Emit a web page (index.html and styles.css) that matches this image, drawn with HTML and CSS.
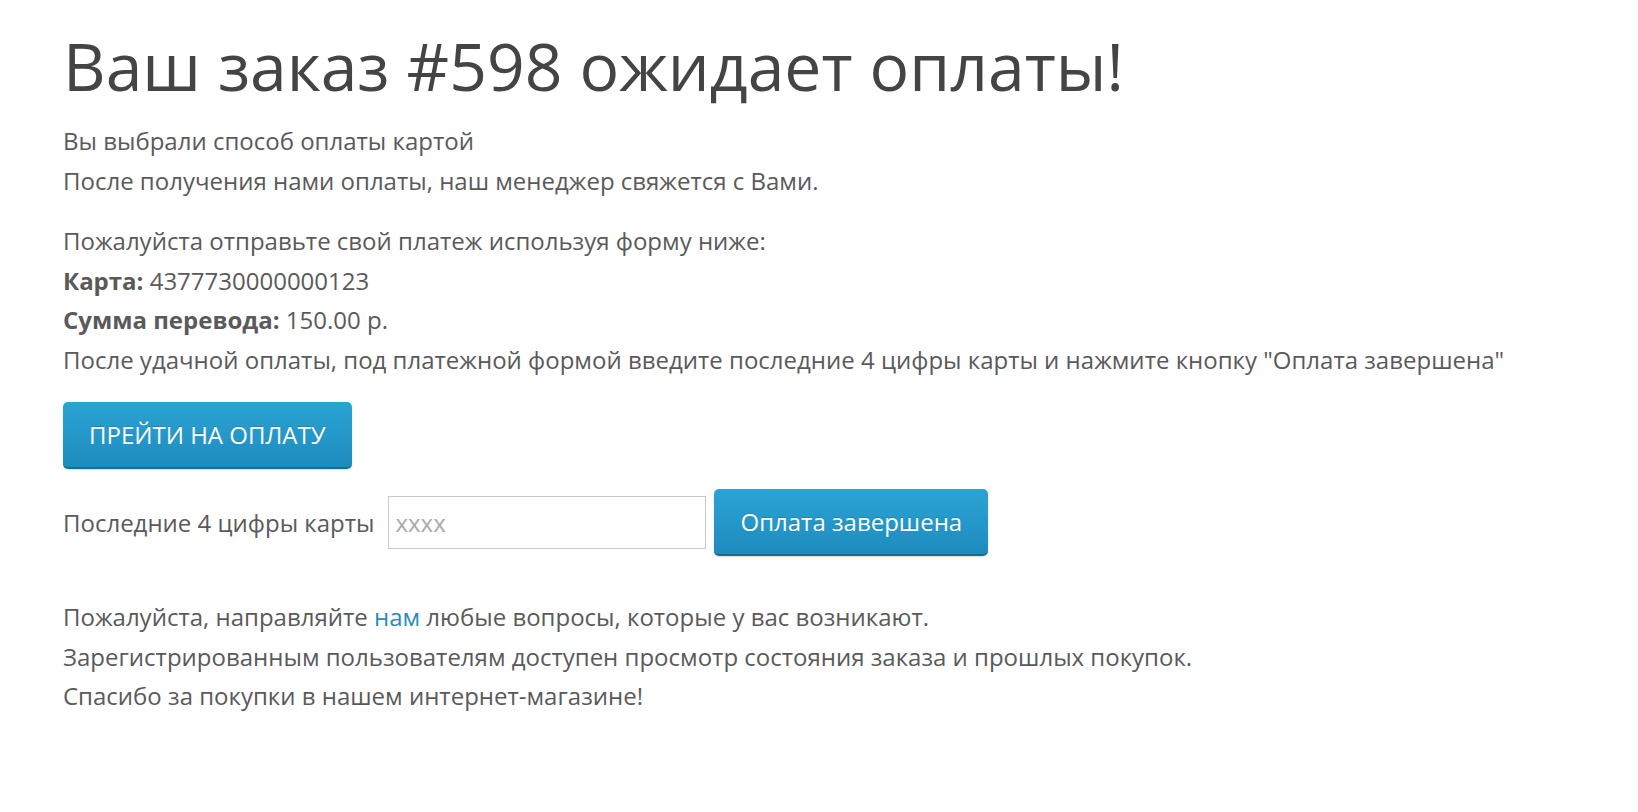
FILE: index.html
```html
<!DOCTYPE html>
<html lang="ru">
<head>
    <meta charset="UTF-8">
    <meta name="viewport" content="width=device-width, initial-scale=1.0">
    <title>Ожидание оплаты</title>
    <link rel="stylesheet" href="styles.css">
</head>
<body>
    <div class="page">
        <h1 class="title">Ваш заказ #598 ожидает оплаты!</h1>

        <div class="block">
            <div class="line">Вы выбрали способ оплаты картой</div>
            <div class="line">После получения нами оплаты, наш менеджер свяжется с Вами.</div>
        </div>

        <div class="block block-pay">
            <div class="line">Пожалуйста отправьте свой платеж используя форму ниже:</div>
            <div class="line"><b>Карта:</b> 4377730000000123</div>
            <div class="line"><b>Сумма перевода:</b> 150.00 р.</div>
            <div class="line">После удачной оплаты, под платежной формой введите последние 4 цифры карты и нажмите кнопку "Оплата завершена"</div>
        </div>

        <button class="btn btn-pay" type="button">ПРЕЙТИ НА ОПЛАТУ</button>

        <form class="confirm">
            <label class="confirm-label" for="digits">Последние 4 цифры карты</label>
            <input class="confirm-input" id="digits" type="text" placeholder="xxxx">
            <button class="btn" type="button">Оплата завершена</button>
        </form>

        <div class="block block-footer">
            <div class="line">Пожалуйста, направляйте <a href="#">нам</a> любые вопросы, которые у вас возникают.</div>
            <div class="line">Зарегистрированным пользователям доступен просмотр состояния заказа и прошлых покупок.</div>
            <div class="line">Спасибо за покупки в нашем интернет-магазине!</div>
        </div>
    </div>
</body>
</html>
```

FILE: styles.css
```css
body {
    margin: 0;
    background: #fff;
    font-family: "Open Sans", "Noto Sans", sans-serif;
    font-size: 24px;
    color: #5a5a5a;
}

.page {
    padding: 30px 63px;
}

.title {
    margin: 0;
    font-size: 66px;
    font-weight: 400;
    line-height: 70px;
    color: #444;
}

.block {
    margin-top: 21px;
}

.line {
    line-height: 39.5px;
}

.line b {
    font-weight: 700;
}

.block-pay {
    margin-top: 21px;
}

.block-footer {
    margin-top: 41px;
}

.line a {
    color: #2a8bbf;
    text-decoration: none;
}

.btn {
    display: inline-block;
    padding: 17px 26px;
    font-family: inherit;
    font-size: 24px;
    line-height: 31px;
    color: #fff;
    text-shadow: 0 -1px 0 rgba(0, 0, 0, 0.15);
    background: linear-gradient(to bottom, #2aa4d4, #1f8bbf);
    border: none;
    border-bottom: 2px solid #1b6c92;
    border-radius: 5px;
    box-shadow: 0 1px 2px rgba(0, 0, 0, 0.15);
    cursor: pointer;
}

.btn-pay {
    margin-top: 23px;
}

.confirm {
    display: flex;
    align-items: center;
    margin: 20px 0 0;
}

.confirm-label {
    margin-right: 14px;
}

.confirm-input {
    width: 318px;
    height: 53px;
    box-sizing: border-box;
    margin-right: 8px;
    padding: 0 6px;
    font-family: inherit;
    font-size: 24px;
    color: #555;
    border: 1px solid #c8c8c8;
    border-radius: 0;
    outline: none;
}

.confirm-input::placeholder {
    color: #aaa;
}
```
